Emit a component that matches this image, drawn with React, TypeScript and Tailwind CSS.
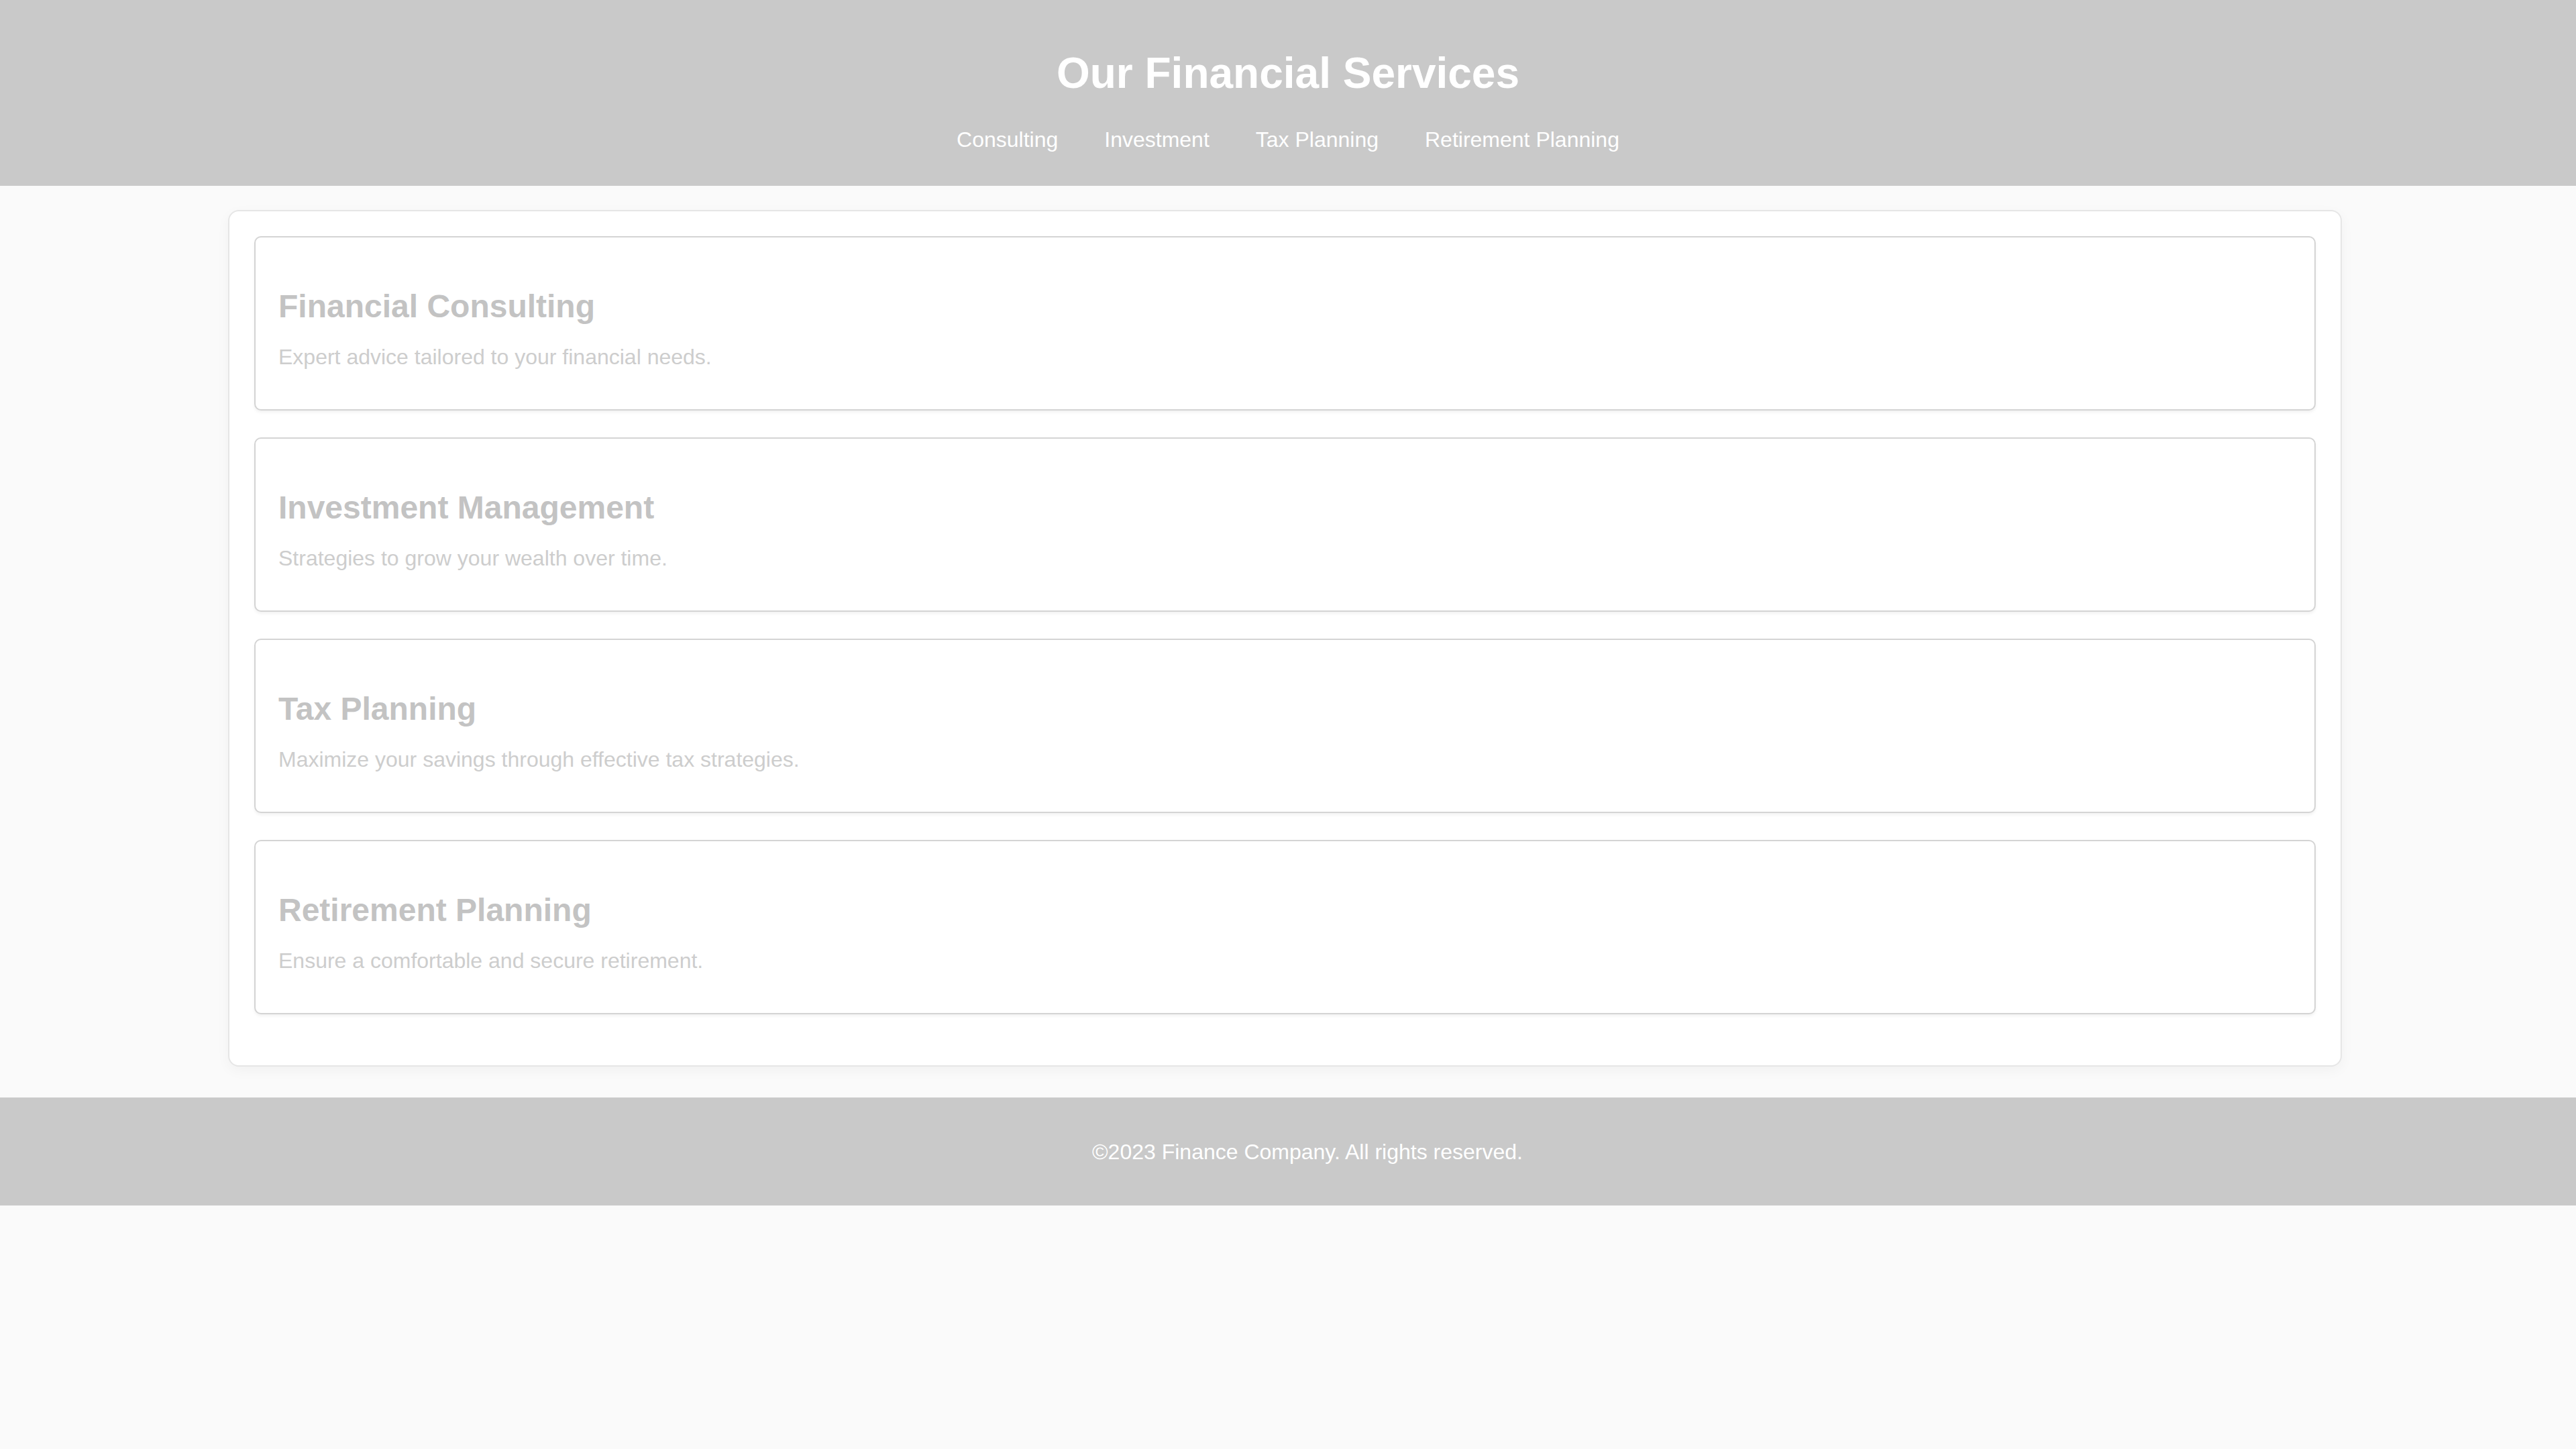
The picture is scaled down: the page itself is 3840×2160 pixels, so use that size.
import React from 'react';

const links = ['Consulting', 'Investment', 'Tax Planning', 'Retirement Planning'];

const services = [
  { title: 'Financial Consulting', text: 'Expert advice tailored to your financial needs.' },
  { title: 'Investment Management', text: 'Strategies to grow your wealth over time.' },
  { title: 'Tax Planning', text: 'Maximize your savings through effective tax strategies.' },
  { title: 'Retirement Planning', text: 'Ensure a comfortable and secure retirement.' },
];

const ServiceCard = ({ title, text }: { title: string; text: string }) => (
  <div className="h-[260px] rounded-[10px] border-2 border-[#d4d4d4] bg-white px-[34px] pt-[75px] shadow-[0_3px_4px_rgba(0,0,0,0.05)]">
    <h2 className="text-[48px] font-bold leading-[56px] text-[#c3c3c3]">{title}</h2>
    <p className="mt-[29px] text-[32px] leading-[36px] text-[#cdcdcd]">{text}</p>
  </div>
);

export default function App() {
  return (
    <div className="min-h-screen bg-[#fafafa] font-['Liberation_Sans',Arial,sans-serif]">
      <header className="flex h-[277px] flex-col items-center bg-[#c9c9c9] pt-[72px] text-white">
        <h1 className="text-[64px] font-bold leading-[74px]">Our Financial Services</h1>
        <nav className="mt-[44px] flex gap-[69px] text-[32px] leading-[37px]">
          {links.map((l) => (
            <a key={l} href="#">
              {l}
            </a>
          ))}
        </nav>
      </header>

      <main className="ml-[340px] mt-[36px] w-[3151px] rounded-[16px] border-2 border-[#e6e6e6] bg-white px-[37px] pb-[76px] pt-[37px] shadow-[0_6px_20px_rgba(0,0,0,0.04)]">
        <div className="flex flex-col gap-[40px]">
          {services.map((s) => (
            <ServiceCard key={s.title} {...s} />
          ))}
        </div>
      </main>

      <footer className="mt-[46px] flex h-[161px] items-center justify-center bg-[#c9c9c9] pl-[58px] text-[32px] text-white">
        ©2023 Finance Company. All rights reserved.
      </footer>
    </div>
  );
}
